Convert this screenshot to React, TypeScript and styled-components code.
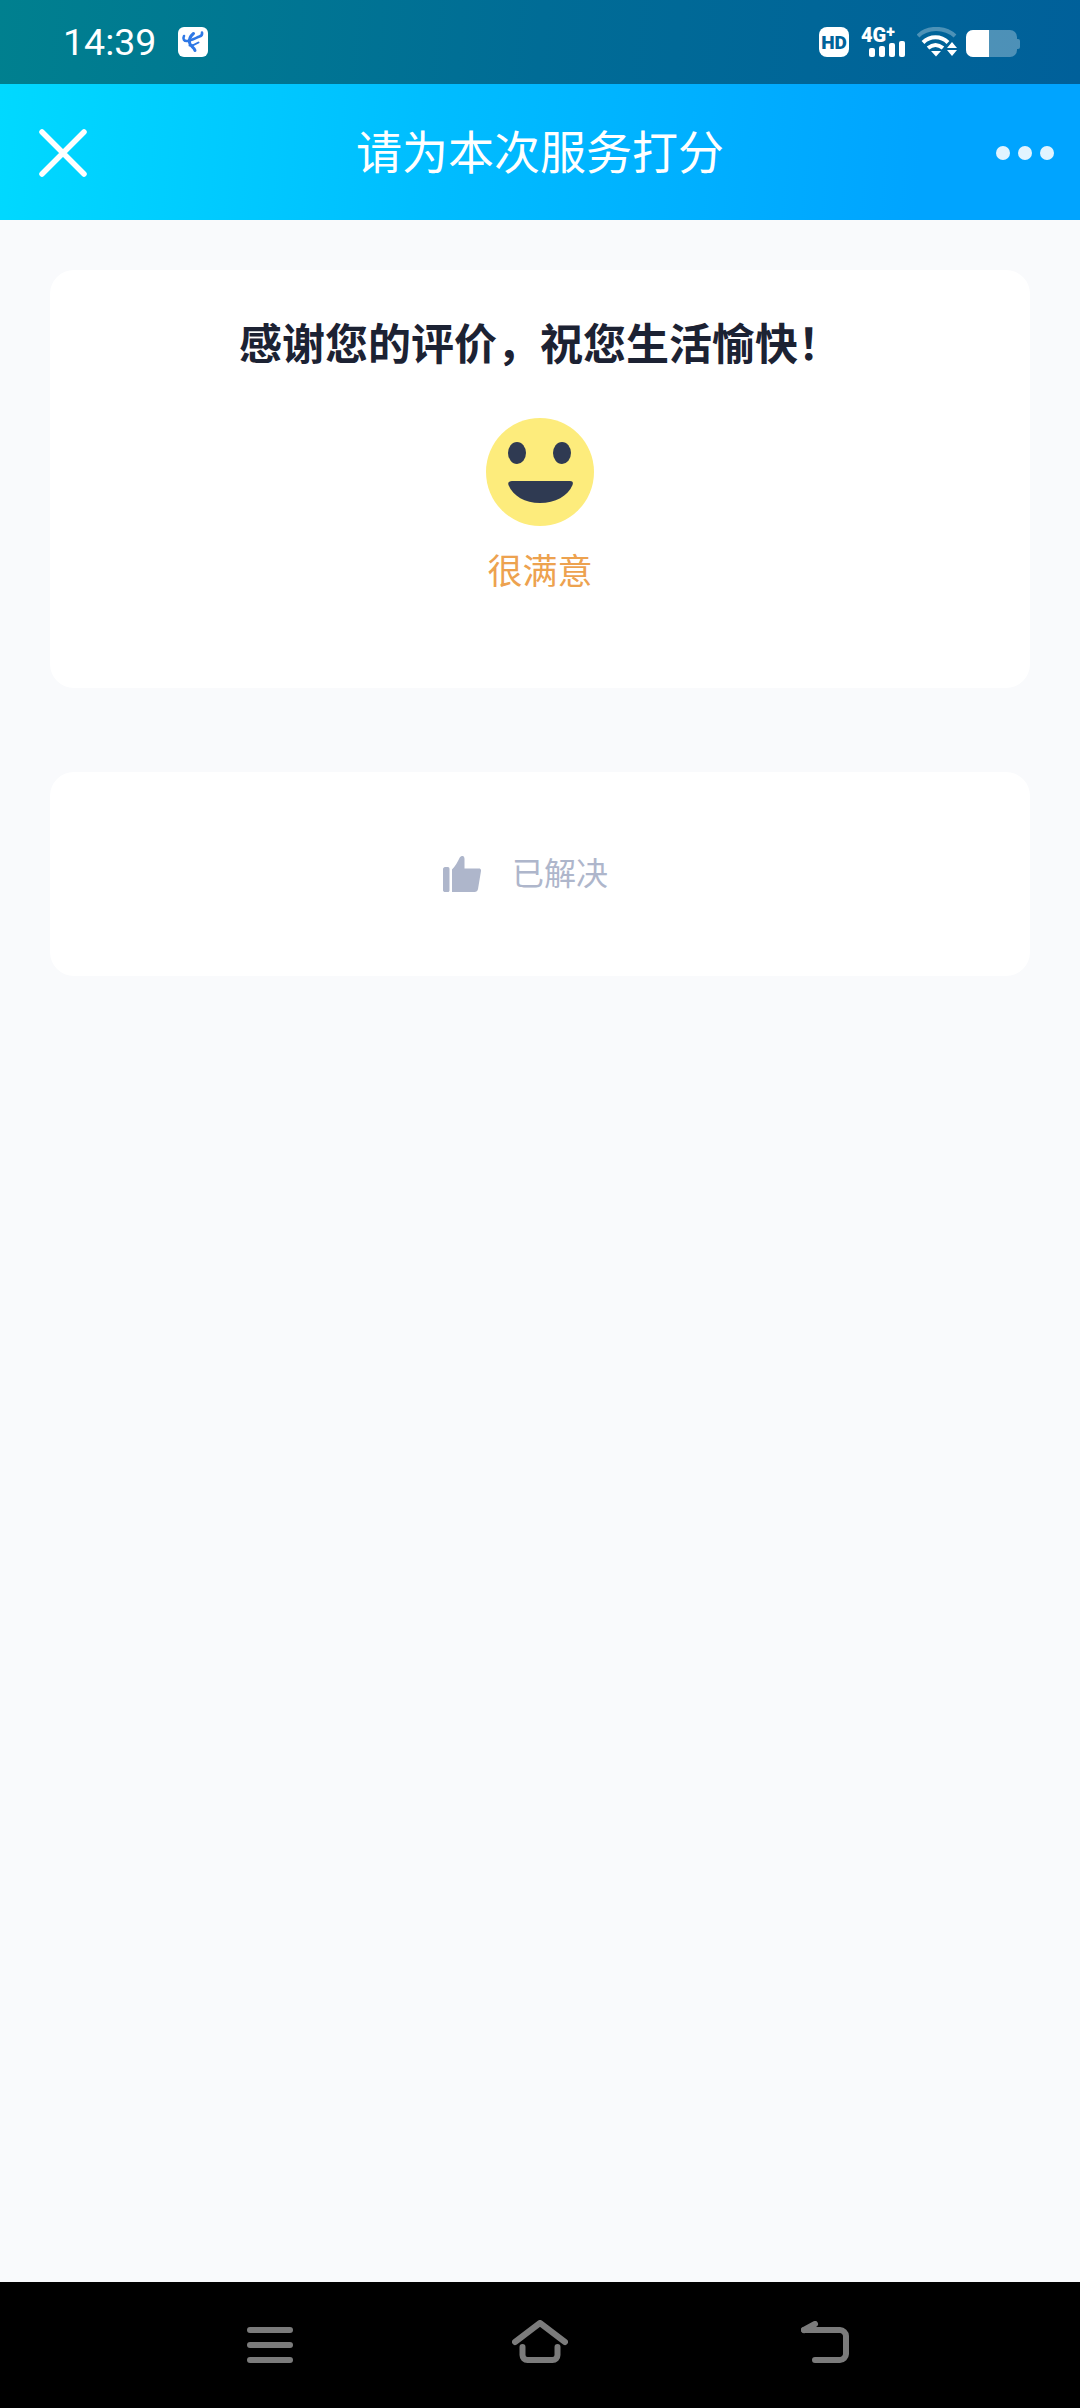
import React from "react"
import styled, { createGlobalStyle } from "styled-components"

const GlobalStyle = createGlobalStyle`
  html, body {
    margin: 0;
    padding: 0;
    background: #f9fafc;
    font-family: "Roboto", "Noto Sans CJK SC", sans-serif;
  }
`

function TelecomLogo() {
  return (
    <LogoBox>
      <svg width="30" height="30" viewBox="0 0 30 30" fill="none" stroke="#2f78e6" strokeLinecap="round">
        <path d="M6 9c-1.500 3 0 5.500 3.500 5 4-.5 9-3.500 12-4.500 2-.7 3-2 2.500-4" strokeWidth="2.600" />
        <path d="M15.500 6.500c-3 2.500-4.500 6-4 9 .5 4 4.500 4.500 5.500 8" strokeWidth="3" />
        <path d="M11.500 18.500c3 0 6-1 9-3" strokeWidth="2" />
      </svg>
    </LogoBox>
  )
}

function HdIcon() {
  return (
    <HdBox>
      <HdText>HD</HdText>
    </HdBox>
  )
}

function SignalIcon() {
  return (
    <SignalBox>
      <NetworkText>4G<sup>+</sup></NetworkText>
      <Bars>
        <Bar $h={9} />
        <Bar $h={11} />
        <Bar $h={14} />
        <Bar $h={16} />
      </Bars>
    </SignalBox>
  )
}

function WifiIcon() {
  return (
    <svg width="40" height="30" viewBox="0 0 40 30" fill="none">
      <path d="M1 9C10-.5 28-.5 38 9" stroke="#fff" strokeOpacity=".3" strokeWidth="4" />
      <path d="M6 15.500C13 8.500 24 8.500 31 15.500" stroke="#fff" strokeWidth="4" />
      <path d="M11 21C16 17 21 17 26 21" stroke="#fff" strokeWidth="4" />
      <path d="M14 24h10l-5 5.500z" fill="#fff" />
      <path d="M30 21l5-6 5 6zM30 23h10l-5 6z" fill="#fff" />
    </svg>
  )
}

function BatteryIcon() {
  return (
    <Battery>
      <BatteryFill $percent={46} />
      <BatteryCap />
    </Battery>
  )
}

function CloseIcon() {
  return (
    <svg width="48" height="48" viewBox="0 0 48 48" fill="none">
      <path d="M3 3l42 42M45 3L3 45" stroke="#fff" strokeWidth="5.500" strokeLinecap="round" />
    </svg>
  )
}

function Smiley() {
  return (
    <svg width="108" height="108" viewBox="0 0 108 108">
      <circle cx="54" cy="54" r="54" fill="#fdec7c" />
      <ellipse cx="31" cy="35" rx="9" ry="11" fill="#2f3a52" />
      <ellipse cx="76" cy="35" rx="9" ry="11" fill="#2f3a52" />
      <path d="M26 63h58c2.500 0 3.500 1.500 2.500 4C82 78 69 85 54 85S27 78 22.500 67c-1-2.500 1-4 3.500-4z" fill="#2f3a52" />
    </svg>
  )
}

function ThumbIcon() {
  return (
    <svg width="38" height="36" viewBox="0 0 38 36" fill="#aeb6cb">
      <path d="M0 13c0-1 1-2 2-2h3c.8 0 1.500.8 1.500 2v21.500c0 .8-.7 1.500-1.500 1.500H2c-1 0-2-.7-2-1.500z" />
      <path d="M9 13.500c3-3 6-8 7.500-11.500C17.200.500 18.500 0 19.500 0 21 0 21.500 1.500 21.500 3v9.500H36c1.500 0 2.200 1 2 2.500l-3 18c-.4 2-1.500 3-3.500 3H9z" />
    </svg>
  )
}

function MenuKey() {
  return (
    <svg width="46" height="36" viewBox="0 0 46 36" fill="#7b7b7b">
      <rect x="0" y="0" width="46" height="6" rx="3" />
      <rect x="0" y="15" width="46" height="6" rx="3" />
      <rect x="0" y="30" width="46" height="6" rx="3" />
    </svg>
  )
}

function HomeKey() {
  return (
    <svg width="56" height="43" viewBox="0 0 56 43" fill="none" stroke="#7b7b7b" strokeWidth="6" strokeLinecap="round" strokeLinejoin="round">
      <path d="M3 22L28 3l25 19" />
      <path d="M10.500 27v8c0 3 2 5 5 5h25c3 0 5-2 5-5v-8" />
    </svg>
  )
}

function BackKey() {
  return (
    <svg width="48" height="42" viewBox="0 0 48 42" fill="none" stroke="#7b7b7b" strokeWidth="6" strokeLinecap="round" strokeLinejoin="round">
      <path d="M3 9h36c3 0 6 3 6 6v18c0 3-3 6-6 6H14" />
      <path d="M3 9l11-6" />
    </svg>
  )
}

export default function App() {
  return (
    <>
      <GlobalStyle />
      <Page>
        <StatusBar>
          <StatusLeft>
            <Time>14:39</Time>
            <TelecomLogo />
          </StatusLeft>
          <StatusRight>
            <HdIcon />
            <SignalIcon />
            <WifiIcon />
            <BatteryIcon />
          </StatusRight>
        </StatusBar>
        <Header>
          <CloseButton>
            <CloseIcon />
          </CloseButton>
          <Title>请为本次服务打分</Title>
          <MoreButton>
            <Dot />
            <Dot />
            <Dot />
          </MoreButton>
        </Header>
        <Content>
          <RatingCard>
            <Heading>感谢您的评价，祝您生活愉快！</Heading>
            <FaceWrap>
              <Smiley />
            </FaceWrap>
            <RatingLabel>很满意</RatingLabel>
          </RatingCard>
          <ResolvedCard>
            <ThumbIcon />
            <ResolvedText>已解决</ResolvedText>
          </ResolvedCard>
        </Content>
        <NavBar>
          <MenuKey />
          <HomeKey />
          <BackKey />
        </NavBar>
      </Page>
    </>
  )
}

const Page = styled.div`
  display: flex;
  flex-direction: column;
  width: 1080px;
  height: 2408px;
  overflow: hidden;
  background: #f9fafc;
`

const StatusBar = styled.div`
  display: flex;
  align-items: center;
  justify-content: space-between;
  box-sizing: border-box;
  height: 84px;
  padding: 0 63px 0 63px;
  background: linear-gradient(95deg, #00808f 0%, #006c96 50%, #00609a 100%);
`

const StatusLeft = styled.div`
  display: flex;
  align-items: center;
  gap: 22px;
`

const Time = styled.span`
  font-family: "Roboto", sans-serif;
  font-size: 37.500px;
  line-height: 44px;
  color: #fff;
`

const LogoBox = styled.div`
  display: flex;
  width: 30px;
  height: 30px;
  border-radius: 6px;
  background: #fff;
`

const StatusRight = styled.div`
  display: flex;
  align-items: center;
  gap: 9px;
`

const HdBox = styled.div`
  display: flex;
  align-items: center;
  justify-content: center;
  width: 30px;
  height: 30px;
  border-radius: 8px;
  background: #fff;
  margin-right: 3px;
`

const HdText = styled.span`
  font-family: "Roboto", sans-serif;
  font-size: 19px;
  font-weight: 900;
  color: #00629a;
`

const SignalBox = styled.div`
  position: relative;
  width: 44px;
  height: 30px;
  margin-right: 3px;
`

const NetworkText = styled.span`
  position: absolute;
  left: 0;
  top: -1px;
  font-family: "Roboto", sans-serif;
  font-size: 20px;
  line-height: 18px;
  font-weight: 900;
  color: #fff;

  sup {
    font-size: 16px;
    line-height: 0;
    vertical-align: 5px;
  }
`

const Bars = styled.div`
  position: absolute;
  right: 0;
  bottom: 0;
  display: flex;
  align-items: flex-end;
  gap: 4px;
`

const Bar = styled.div<{ $h: number }>`
  width: 6px;
  height: ${(p) => p.$h}px;
  border-radius: 2px;
  background: #fff;
`

const Battery = styled.div`
  position: relative;
  display: flex;
  width: 51px;
  height: 27px;
  margin-top: 3px;
  border-radius: 7px;
  overflow: visible;
  background: rgba(255, 255, 255, 0.3);
`

const BatteryFill = styled.div<{ $percent: number }>`
  width: ${(p) => p.$percent}%;
  height: 100%;
  border-radius: 7px 0 0 7px;
  background: #fff;
`

const BatteryCap = styled.div`
  position: absolute;
  right: -3px;
  top: 9px;
  width: 3px;
  height: 10px;
  border-radius: 0 2px 2px 0;
  background: rgba(255, 255, 255, 0.3);
`

const Header = styled.div`
  display: grid;
  grid-template-columns: 1fr auto 1fr;
  align-items: center;
  box-sizing: border-box;
  height: 136px;
  padding: 2px 26px 0;
  background: linear-gradient(95deg, #00d9ff 0%, #00bdff 40%, #00a4ff 85%, #00a4ff 100%);
`

const CloseButton = styled.div`
  display: flex;
  justify-self: start;
  margin-left: 13px;
`

const Title = styled.div`
  font-size: 46px;
  line-height: 60px;
  color: #fff;
`

const MoreButton = styled.div`
  display: flex;
  justify-self: end;
  gap: 8px;
`

const Dot = styled.span`
  width: 14px;
  height: 14px;
  border-radius: 50%;
  background: #e2f4ff;
`

const Content = styled.div`
  flex: 1;
  display: flex;
  flex-direction: column;
  gap: 84px;
  padding: 50px 50px 0;
`

const RatingCard = styled.div`
  display: flex;
  flex-direction: column;
  align-items: center;
  box-sizing: border-box;
  height: 418px;
  padding-top: 47px;
  border-radius: 24px;
  background: #fff;
`

const Heading = styled.div`
  font-size: 43px;
  line-height: 56px;
  font-weight: 700;
  color: #1c2233;
  white-space: nowrap;
`

const FaceWrap = styled.div`
  display: flex;
  margin-top: 45px;
`

const RatingLabel = styled.div`
  margin-top: 24px;
  font-size: 35px;
  line-height: 46px;
  color: #eda24f;
`

const ResolvedCard = styled.div`
  display: flex;
  align-items: center;
  justify-content: center;
  gap: 34px;
  box-sizing: border-box;
  height: 204px;
  padding-right: 29px;
  border-radius: 24px;
  background: #fff;
`

const ResolvedText = styled.span`
  font-size: 32px;
  line-height: 44px;
  color: #aeb6cb;
  margin-left: -3px;
`

const NavBar = styled.div`
  display: grid;
  grid-template-columns: 265px 289px auto;
  align-items: end;
  box-sizing: border-box;
  height: 126px;
  padding: 0 0 45px 247px;
  background: #000;
`
